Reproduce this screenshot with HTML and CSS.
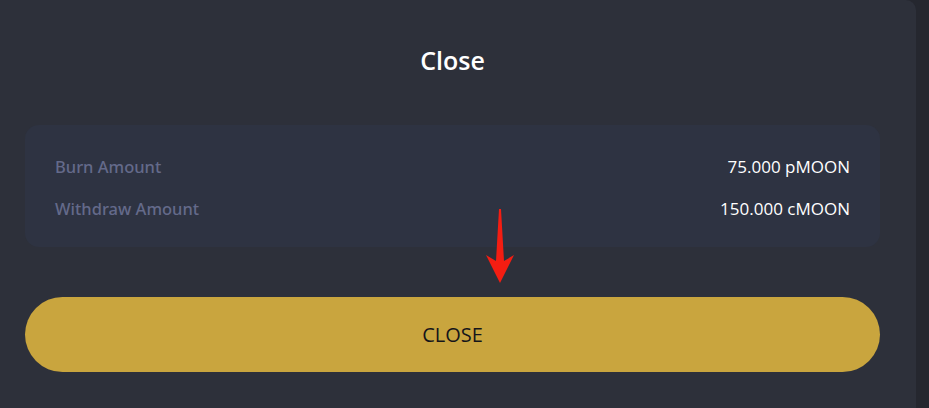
FILE: index.html
```html
<!DOCTYPE html>
<html>
<head>
<meta charset="utf-8">
<link rel="stylesheet" href="styles.css">
</head>
<body>
<div class="modal">
  <h2 class="title">Close</h2>
  <div class="card">
    <div class="row"><span class="label">Burn Amount</span><span class="value">75.000 pMOON</span></div>
    <div class="row"><span class="label">Withdraw Amount</span><span class="value">150.000 cMOON</span></div>
  </div>
  <button class="btn">CLOSE</button>
  <svg class="arrow" width="30" height="76" viewBox="0 0 30 76">
    <polygon points="14,0 16,0 19,52 29,46 15,74 1,46 11,52" fill="#f41d12"/>
  </svg>
</div>
</body>
</html>
```
FILE: styles.css
```css
html, body {
  margin: 0;
  padding: 0;
  background: #25272f;
  height: 100%;
  overflow: hidden;
}
body {
  font-family: "Open Sans", "Noto Sans", sans-serif;
}
.modal {
  position: relative;
  width: 916px;
  height: 100vh;
  box-sizing: border-box;
  background: #2d303a;
  border-radius: 0 10px 0 0;
  padding: 43px 36px 0 25px;
}
.title {
  margin: 0;
  text-align: center;
  font-size: 25px;
  line-height: 34px;
  font-weight: 600;
  color: #ffffff;
}
.card {
  margin-top: 48px;
  background: #2e3342;
  border-radius: 14px;
  padding: 29px 30px 27px 30px;
  display: flex;
  flex-direction: column;
  gap: 18px;
}
.row {
  display: flex;
  justify-content: space-between;
  align-items: center;
  height: 24px;
  font-size: 17px;
}
.label {
  color: #646a8a;
  font-family: "Noto Sans", "Open Sans", sans-serif;
  font-weight: 500;
  font-size: 16.5px;
}
.value {
  color: #ffffff;
  font-size: 17px;
}
.btn {
  display: block;
  width: 100%;
  margin-top: 50px;
  height: 75px;
  border: none;
  border-radius: 38px;
  background: #c9a53e;
  color: #15151a;
  font-family: "Open Sans", "Noto Sans", sans-serif;
  font-size: 20px;
  font-weight: 500;
  padding: 0;
}
.arrow {
  position: absolute;
  left: 485px;
  top: 209px;
}
```
